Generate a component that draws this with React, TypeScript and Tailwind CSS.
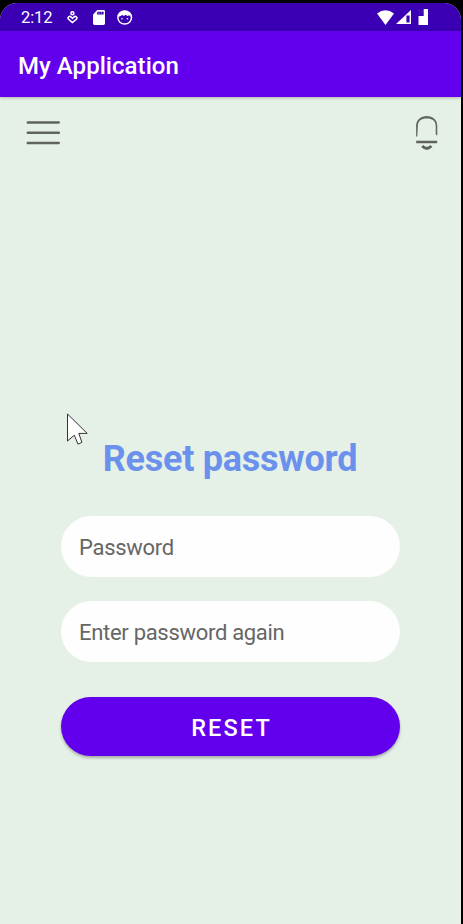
import React from 'react';

function StatusBar() {
  return (
    <header className="flex h-7 shrink-0 items-center justify-between bg-[#3b00b3] pl-[21px] pr-[33px] text-white">
      <div className="flex items-center">
        <span className="w-[46px] pt-[1px] text-[16.5px] leading-7 tracking-[-0.1px]">2:12</span>
        <svg className="h-[13px] w-[11px]" viewBox="0 0 11 13" fill="none" stroke="#fff" strokeWidth="1.5">
          <circle cx="5.4" cy="2.2" r="1.5" />
          <path d="M5.5 11.6 1.4 8.1Q.5 6.8 1.7 5.7 3 4.9 4.2 6.1L5.5 7.5 6.8 6.1Q8 4.9 9.3 5.7 10.5 6.8 9.6 8.1Z" />
        </svg>
        <svg className="ml-[15px] h-[15px] w-[12px]" viewBox="0 0 12 15">
          <path d="M4.3 0H10.6Q12 0 12 1.4V13.6Q12 15 10.6 15H1.4Q0 15 0 13.6V4.5Z" fill="#fff" />
          <path d="M4.2 1.8H10.6V4.6H4.2Z" fill="#3b00b3" />
          <path d="M6 2V4.6M8.4 2V4.6" stroke="#a78be0" strokeWidth=".7" />
        </svg>
        <svg className="ml-[12px] h-[15px] w-[16px]" viewBox="0 0 16 15">
          <ellipse cx="7.7" cy="7.5" rx="6.8" ry="6.6" fill="none" stroke="#fff" strokeWidth="1.5" />
          <path d="M2.3 2.7 7.7.6 13.1 2.7 13.8 7 12.2 5.2 10.4 6 8.6 4.8 7 6 5.3 5 3.6 6 1.5 7Z" fill="#fff" />
          <circle cx="5" cy="8.7" r=".8" fill="#fff" />
          <circle cx="10.4" cy="8.7" r=".8" fill="#fff" />
        </svg>
      </div>
      <div className="flex items-center">
        <svg className="h-[15px] w-[17px]" viewBox="0 0 17 15">
          <path d="M0 3.6Q8.5-3.2 17 3.6L8.5 15Z" fill="#fff" />
        </svg>
        <svg className="ml-[2px] h-[14px] w-[15px]" viewBox="0 0 15 14">
          <path d="M15 0V14H0ZM10.4 5.5V12.6H13.6V5.5Z" fill="#fff" fillRule="evenodd" />
        </svg>
        <svg className="ml-[7px] h-[16px] w-[10px]" viewBox="0 0 10 16">
          <path d="M5.7 0H10V16H.5V7H5.7Z" fill="#fff" />
          <path d="M.5 1.5H2M3 2.7H4.5M1 4.2H2.5" stroke="#5630bd" strokeWidth="1" />
        </svg>
      </div>
    </header>
  );
}

function Cursor() {
  return (
    <svg className="absolute left-[67px] top-[410px] h-[33px] w-[22px]" viewBox="0 0 22 33">
      <path d="M.5 1 20.2 20.4H11.8L14.9 29.3 11 31.2 7.3 22.2.5 28Z" fill="#fff" stroke="#333" strokeWidth="1" />
    </svg>
  );
}

const fieldClass =
  'h-[61px] w-full rounded-full bg-[#fdfefd] px-[18px] pt-[2px] text-[22px] tracking-[-0.3px] text-[#666] outline-none placeholder:text-[#666] placeholder:opacity-100';

export default function App() {
  return (
    <div className="h-[924px] w-[463px] overflow-hidden bg-black pr-[2px] pt-[3px] font-[Roboto,sans-serif]">
      <div className="relative flex h-full flex-col overflow-hidden rounded-t-[17px] bg-[#e5f1e7]">
        <StatusBar />
        <div className="z-10 flex h-[66px] shrink-0 items-center bg-[#6200ee] pl-[18px] pt-[4px] shadow-[0_1px_3px_rgba(0,0,0,0.25)]">
          <h1 className="text-[24px] font-medium tracking-[0.05px] text-white">My Application</h1>
        </div>
        <main className="flex flex-1 flex-col">
          <nav className="flex h-[60px] justify-between pl-[26px] pr-[23px] pt-[19px]">
            <button aria-label="Menu" className="mt-[4px] h-[25px] w-[34px]">
              <svg className="h-[25px] w-[34px]" viewBox="0 0 34 25" stroke="#60645f" strokeWidth="2.5" strokeLinecap="round">
                <path d="M1.8 2.4H32.8M1.8 12.8H32.8M1.8 22.9H32.8" />
              </svg>
            </button>
            <button aria-label="Notifications" className="h-[35px] w-[22px]">
              <svg className="h-[35px] w-[22px]" viewBox="0 0 22 35" fill="none">
                <path d="M.1 21V9.8C.1 3.8 4.8 0 10.8 0S21.3 3.8 21.3 9.8V19.5L19.7 18.5V10C19.7 5 16 2.6 10.8 2.6S1.9 5 1.9 10L1.3 20Z" fill="#636762" />
                <path d="M.2 26H21.2" stroke="#60645f" strokeWidth="2.6" />
                <path d="M6.2 30Q10.8 34.6 15.4 30" stroke="#60645f" strokeWidth="3" />
              </svg>
            </button>
          </nav>
          <form className="mt-[277px] flex flex-col px-[61px]" onSubmit={(e) => e.preventDefault()}>
            <h2 className="h-[50px] whitespace-nowrap pr-[1px] text-center text-[36px] font-bold leading-[50px] tracking-[-0.25px] text-[#6b91ed]">Reset password</h2>
            <input aria-label="Password" placeholder="Password" className={`mt-[32px] ${fieldClass}`} />
            <input aria-label="Enter password again" placeholder="Enter password again" className={`mt-[23.6px] ${fieldClass}`} />
            <button className="mt-[35.4px] h-[59px] w-full rounded-full bg-[#6200ee] pl-[2px] pt-[4px] text-[23.5px] font-medium tracking-[2.1px] text-white shadow-[0_2px_3px_rgba(0,0,0,0.28)]">
              RESET
            </button>
          </form>
        </main>
        <Cursor />
      </div>
    </div>
  );
}
